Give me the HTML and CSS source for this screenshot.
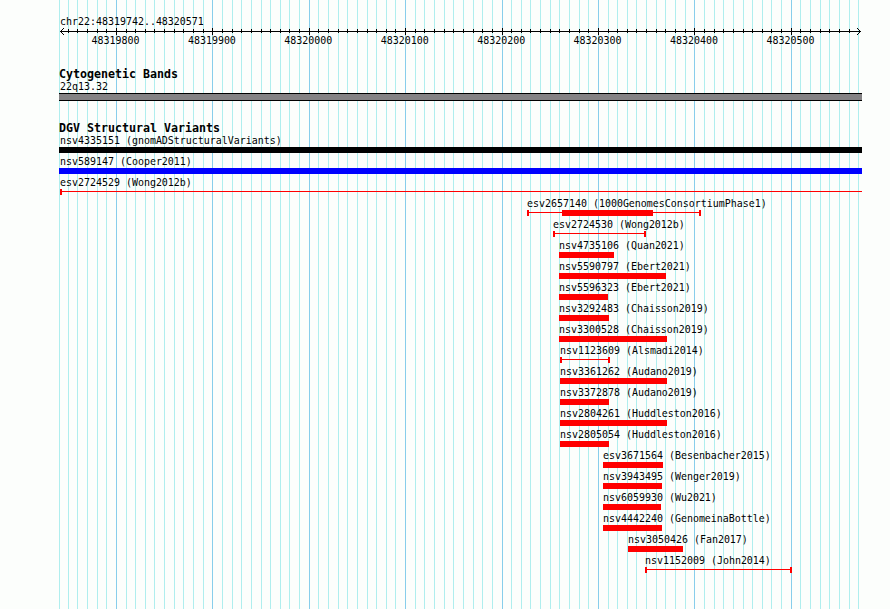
FILE: index.html
```html
<!DOCTYPE html>
<html lang="en">
<head>
<meta charset="utf-8">
<title>chr22:48319742..48320571</title>
<link rel="stylesheet" href="styles.css">
</head>
<body>
<main class="browser">
<svg class="grid" width="890" height="609" aria-hidden="true"><path id="grid-minor" class="minor"/><path id="grid-major" class="major"/></svg>
<section class="ruler">
<div class="region">chr22:48319742..48320571</div>
<svg class="axis" width="803" height="7" aria-hidden="true"><path id="ticks" d="M1 3h801v1H1z"/><path d="M2 2h1v1H2zM3 1h1v1H3zM4 0h1v1H4zM2 4h1v1H2zM3 5h1v1H3zM4 6h1v1H4zM800 2h1v1h-1zM799 1h1v1h-1zM798 0h1v1h-1zM800 4h1v1h-1zM799 5h1v1h-1zM798 6h1v1h-1z"/></svg>
<div class="positions"><span>48319800</span><span>48319900</span><span>48320000</span><span>48320100</span><span>48320200</span><span>48320300</span><span>48320400</span><span>48320500</span></div>
</section>
<section class="bands">
<h2>Cytogenetic Bands</h2>
<div class="band-name">22q13.32</div>
<div class="band"></div>
</section>
<section class="variants">
<h2>DGV Structural Variants</h2>
<div class="feature" style="--x:0px;--w:803px"><span class="inset">nsv4335151 (gnomADStructuralVariants)</span><i class="bar black"></i></div>
<div class="feature" style="--x:0px;--w:803px"><span class="inset">nsv589147 (Cooper2011)</span><i class="bar blue"></i></div>
<div class="feature" style="--x:1px;--w:802px"><span>esv2724529 (Wong2012b)</span><i class="range open"></i></div>
<div class="feature" style="--x:468px;--w:174px"><span>esv2657140 (1000GenomesConsortiumPhase1)</span><i class="range"><b class="core"></b></i></div>
<div class="feature" style="--x:494px;--w:93px"><span>esv2724530 (Wong2012b)</span><i class="range"></i></div>
<div class="feature" style="--x:500px;--w:55px"><span>nsv4735106 (Quan2021)</span><i class="bar"></i></div>
<div class="feature" style="--x:500px;--w:107px"><span>nsv5590797 (Ebert2021)</span><i class="bar"></i></div>
<div class="feature" style="--x:500px;--w:49px"><span>nsv5596323 (Ebert2021)</span><i class="bar"></i></div>
<div class="feature" style="--x:500px;--w:50px"><span>nsv3292483 (Chaisson2019)</span><i class="bar"></i></div>
<div class="feature" style="--x:500px;--w:108px"><span>nsv3300528 (Chaisson2019)</span><i class="bar"></i></div>
<div class="feature" style="--x:501px;--w:50px"><span>nsv1123609 (Alsmadi2014)</span><i class="range"></i></div>
<div class="feature" style="--x:501px;--w:107px"><span>nsv3361262 (Audano2019)</span><i class="bar"></i></div>
<div class="feature" style="--x:501px;--w:49px"><span>nsv3372878 (Audano2019)</span><i class="bar"></i></div>
<div class="feature" style="--x:501px;--w:107px"><span>nsv2804261 (Huddleston2016)</span><i class="bar"></i></div>
<div class="feature" style="--x:501px;--w:49px"><span>nsv2805054 (Huddleston2016)</span><i class="bar"></i></div>
<div class="feature" style="--x:544px;--w:60px"><span>esv3671564 (Besenbacher2015)</span><i class="bar"></i></div>
<div class="feature" style="--x:544px;--w:59px"><span>nsv3943495 (Wenger2019)</span><i class="bar"></i></div>
<div class="feature" style="--x:544px;--w:58px"><span>nsv6059930 (Wu2021)</span><i class="bar"></i></div>
<div class="feature" style="--x:544px;--w:59px"><span>nsv4442240 (GenomeinaBottle)</span><i class="bar"></i></div>
<div class="feature" style="--x:569px;--w:55px"><span>nsv3050426 (Fan2017)</span><i class="bar"></i></div>
<div class="feature" style="--x:586px;--w:147px"><span>nsv1152009 (John2014)</span><i class="range"></i></div>
</section>
</main>
<script src="grid.js"></script>
</body>
</html>
```
FILE: styles.css
```css
* { box-sizing: border-box; }
body { margin: 0; background: #fcfefc; color: #000; }
.browser { position: relative; width: 890px; height: 609px; padding: 15px 28px 0 59px; overflow: hidden; font: 9.967px/13px "DejaVu Sans Mono", monospace; }
.grid { position: absolute; left: 0; top: 0; }
.grid path, .axis path { shape-rendering: crispEdges; }
.minor { fill: #afeeee; }
.major { fill: #87ceeb; }
.ruler, .bands, .variants { position: relative; width: 803px; }
.ruler { height: 52px; }
.region { height: 13px; padding-left: 1px; }
.axis { display: block; }
.positions { display: flex; width: 723px; margin-left: 32.5px; justify-content: space-between; line-height: 11px; }
.positions span { width: 48px; }
h2 { margin: 0; height: 13px; font: bold 11.63px/14px "DejaVu Sans Mono", monospace; }
.bands { height: 54px; }
.band-name { height: 13px; padding-left: 1px; }
.band { height: 8px; background: #848284; border: solid #000; border-width: 1px 0; }
.variants { height: 460px; }
.feature { display: flex; flex-direction: column; height: 21px; padding-left: var(--x); white-space: nowrap; }
.feature span { height: 13px; }
.feature .inset { padding-left: 1px; }
.bar { width: var(--w); height: 6px; background: #f00; }
.black { background: #000; }
.blue { background: #00f; }
.range { display: block; width: var(--w); height: 6px; border: solid #f00; border-width: 0 2px; background: linear-gradient(#f00, #f00) 0 2px / 100% 1px no-repeat; }
.open { border-right: 0; }
.core { display: block; width: 91px; height: 6px; margin-left: 33px; background: #f00; }
```
FILE: grid.js
```js
// Grid lines fall every 10 bases; every tenth line is a major one.
const left = 59, height = 609;
let minor = '', major = '', ticks = '';
for (let i = -6; i <= 77; i++) {
  const x = Math.max(left, Math.floor(116.4 + i * 9.64));
  const isMajor = i % 10 === 0;
  const line = `M${x} 0h1v${height}h-1z`;
  if (isMajor) major += line; else minor += line;
  if (i > -6 && i < 77) ticks += isMajor ? `M${x - left} 0h1v7h-1z` : `M${x - left} 1h1v4h-1z`;
}
document.getElementById('grid-minor').setAttribute('d', minor);
document.getElementById('grid-major').setAttribute('d', major);
const axis = document.getElementById('ticks');
axis.setAttribute('d', axis.getAttribute('d') + ticks);
```
